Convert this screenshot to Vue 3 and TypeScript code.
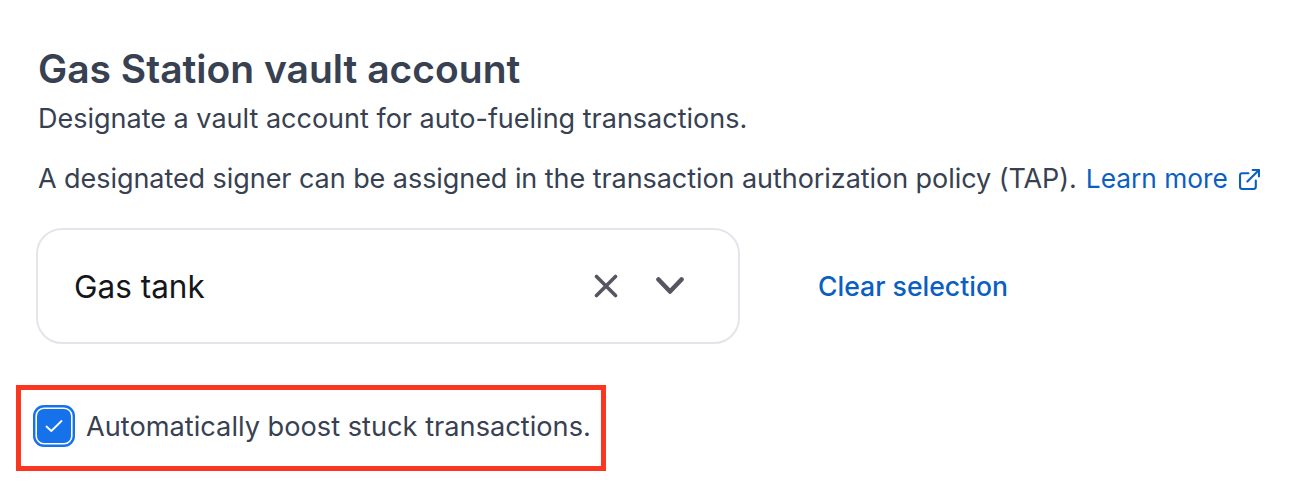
<script setup lang="ts">
</script>

<template>
  <main class="page">
    <h1 class="title">Gas Station vault account</h1>
    <p class="desc">Designate a vault account for auto-fueling transactions.</p>
    <p class="desc second">
      <span class="signer">A designated signer can be assigned in the transaction authorization policy (TAP).</span>
      <a class="link">Learn more<svg class="ext" viewBox="2 2 20 20" width="21" height="21" fill="none" stroke="currentColor" stroke-width="2" stroke-linecap="round" stroke-linejoin="round"><path d="M18 13v6a2 2 0 0 1-2 2H5a2 2 0 0 1-2-2V8a2 2 0 0 1 2-2h6"/><path d="M15 3h6v6"/><path d="M10 14 21 3"/></svg></a>
    </p>
    <div class="row">
      <div class="select">
        <span class="value">Gas tank</span>
        <svg class="x" viewBox="0 0 24 24" width="24" height="24" fill="none" stroke="#565662" stroke-width="3.6" stroke-linecap="round"><path d="M2.5 2.5l19 19M21.5 2.5l-19 19"/></svg>
        <svg class="chev" viewBox="0 0 28 18" width="28" height="18" fill="none" stroke="#565662" stroke-width="4.6" stroke-linecap="round" stroke-linejoin="round"><path d="M2.5 2.5L14 14.5 25.5 2.5"/></svg>
      </div>
      <a class="clear">Clear selection</a>
    </div>
    <div class="boost">
      <span class="check"><svg viewBox="0 0 20 20" width="20" height="20" fill="none" stroke="#fff" stroke-width="1.8" stroke-linecap="round" stroke-linejoin="round"><path d="M2.5 10.5l4.8 4.5L17.5 5"/></svg></span>
      <span class="boost-label">Automatically boost stuck transactions.</span>
    </div>
  </main>
</template>

<style scoped>
.page {
  box-sizing: border-box;
  width: 1310px;
  height: 494px;
  padding: 44px 0 0 38px;
  background: #fff;
  font-family: Inter, "Liberation Sans", sans-serif;
  color: #374151;
  overflow: hidden;
}
.title { margin: 0; font-size: 39px; line-height: 50px; font-weight: 600; }
.desc { margin: 0; font-size: 27px; line-height: 40px; white-space: nowrap; }
.desc:first-of-type { margin-top: 5px; }
.second { margin-top: 20px; }
.signer { letter-spacing: -0.06px; }
.link { color: #0b5fc1; font-size: 26.3px; margin-left: 9px; }
.ext { margin-left: 11px; vertical-align: -2px; }
.row { display: flex; align-items: center; margin-top: 29px; }
.select {
  box-sizing: border-box;
  width: 704px; height: 116px;
  margin-left: -2px;
  display: flex; align-items: center;
  padding: 0 54px 0 36px;
  border: 2px solid #e3e5ea;
  border-radius: 26px;
}
.value { flex: 1; font-size: 31.5px; color: #14161a; }
.chev { margin-left: 38px; }
.clear { margin-left: 78px; font-size: 26.6px; font-weight: 500; color: #0b5fc1; }
.boost {
  box-sizing: border-box;
  display: flex; align-items: center; gap: 15px;
  width: 590px; height: 86px;
  margin: 41px 0 0 -22px;
  padding: 0 0 4px 16px;
  border: 5px solid #fa3520;
}
.check {
  box-sizing: border-box;
  flex: none;
  width: 34px; height: 34px;
  display: flex; align-items: center; justify-content: center;
  background: #1672ea;
  border-radius: 7px;
  box-shadow: 0 0 0 1.6px #fff, 0 0 0 4px #1672ea;
}
.boost-label { font-size: 27.2px; white-space: nowrap; }
</style>
